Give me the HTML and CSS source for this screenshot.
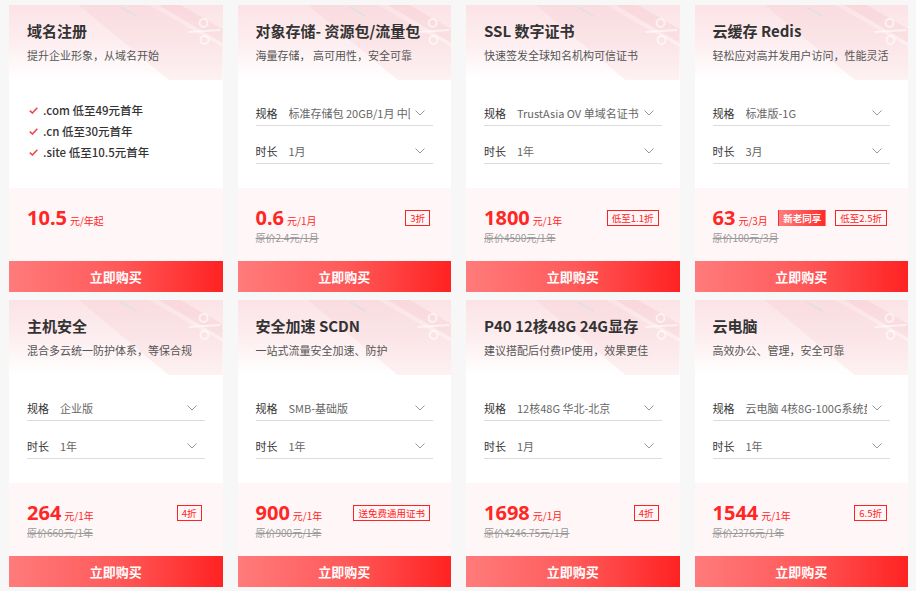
FILE: index.html
```html
<!DOCTYPE html>
<html lang="zh-CN">
<head>
<meta charset="utf-8">
<title>产品</title>
<link rel="stylesheet" href="styles.css">
</head>
<body>
<svg width="0" height="0" class="defs">
  <defs>
    <symbol id="deco" viewBox="0 0 214 75">
      <path d="M70 0 L140 0 L214 42 L214 75 L160 75 Z" fill="#f6c4c9" opacity="0.22"/>
      <path d="M150 0 L172 0 L214 24 L214 38 Z" fill="#f3b0b7" opacity="0.22"/>
      <path d="M112 2 L128 11" stroke="#cfe3ea" stroke-width="1.5" opacity="0.7"/>
      <circle cx="195" cy="18" r="4" fill="none" stroke="#fff" stroke-width="2" opacity="0.6"/>
      <circle cx="196" cy="35" r="4" fill="none" stroke="#fff" stroke-width="2" opacity="0.6"/>
      <path d="M180 27 L212 25" stroke="#fff" stroke-width="2" opacity="0.6"/>
    </symbol>
    <symbol id="chev" viewBox="0 0 10 6">
      <path d="M0.5 0.5 L5 5 L9.5 0.5" fill="none" stroke="#999" stroke-width="1"/>
    </symbol>
    <symbol id="check" viewBox="0 0 9 7">
      <path d="M0.8 3.6 L3.4 6 L8.3 0.8" fill="none" stroke="#f04848" stroke-width="1.6"/>
    </symbol>
  </defs>
</svg>
<div class="grid">

  <div class="card">
    <div class="head"><svg class="deco"><use href="#deco"/></svg><div class="title">域名注册</div><div class="sub">提升企业形象，从域名开始</div></div>
    <div class="body list">
      <div class="li"><svg class="check"><use href="#check"/></svg>.com 低至49元首年</div>
      <div class="li"><svg class="check"><use href="#check"/></svg>.cn 低至30元首年</div>
      <div class="li"><svg class="check"><use href="#check"/></svg>.site 低至10.5元首年</div>
    </div>
    <div class="price"><div class="prow"><span class="num">10.5</span><span class="unit">元/年起</span></div></div>
    <div class="btn">立即购买</div>
  </div>

  <div class="card">
    <div class="head"><svg class="deco"><use href="#deco"/></svg><div class="title">对象存储- 资源包/流量包</div><div class="sub">海量存储， 高可用性，安全可靠</div></div>
    <div class="body">
      <div class="sel"><span class="lab">规格</span><span class="val">标准存储包 20GB/1月 中国内地</span><svg class="chev"><use href="#chev"/></svg></div>
      <div class="sel"><span class="lab">时长</span><span class="val">1月</span><svg class="chev"><use href="#chev"/></svg></div>
    </div>
    <div class="price"><div class="prow"><span class="num">0.6</span><span class="unit">元/1月</span><span class="tags"><span class="tag">3折</span></span></div><div class="orig">原价2.4元/1月</div></div>
    <div class="btn">立即购买</div>
  </div>

  <div class="card">
    <div class="head"><svg class="deco"><use href="#deco"/></svg><div class="title">SSL 数字证书</div><div class="sub">快速签发全球知名机构可信证书</div></div>
    <div class="body">
      <div class="sel"><span class="lab">规格</span><span class="val">TrustAsia OV 单域名证书</span><svg class="chev"><use href="#chev"/></svg></div>
      <div class="sel"><span class="lab">时长</span><span class="val">1年</span><svg class="chev"><use href="#chev"/></svg></div>
    </div>
    <div class="price"><div class="prow"><span class="num">1800</span><span class="unit">元/1年</span><span class="tags"><span class="tag">低至1.1折</span></span></div><div class="orig">原价4500元/1年</div></div>
    <div class="btn">立即购买</div>
  </div>

  <div class="card">
    <div class="head"><svg class="deco"><use href="#deco"/></svg><div class="title">云缓存 Redis</div><div class="sub">轻松应对高并发用户访问，性能灵活</div></div>
    <div class="body">
      <div class="sel"><span class="lab">规格</span><span class="val">标准版-1G</span><svg class="chev"><use href="#chev"/></svg></div>
      <div class="sel"><span class="lab">时长</span><span class="val">3月</span><svg class="chev"><use href="#chev"/></svg></div>
    </div>
    <div class="price"><div class="prow"><span class="num">63</span><span class="unit">元/3月</span><span class="tags"><span class="tag fill">新老同享</span><span class="tag">低至2.5折</span></span></div><div class="orig">原价100元/3月</div></div>
    <div class="btn">立即购买</div>
  </div>

  <div class="card">
    <div class="head"><svg class="deco"><use href="#deco"/></svg><div class="title">主机安全</div><div class="sub">混合多云统一防护体系，等保合规</div></div>
    <div class="body">
      <div class="sel"><span class="lab">规格</span><span class="val">企业版</span><svg class="chev"><use href="#chev"/></svg></div>
      <div class="sel"><span class="lab">时长</span><span class="val">1年</span><svg class="chev"><use href="#chev"/></svg></div>
    </div>
    <div class="price"><div class="prow"><span class="num">264</span><span class="unit">元/1年</span><span class="tags"><span class="tag">4折</span></span></div><div class="orig">原价660元/1年</div></div>
    <div class="btn">立即购买</div>
  </div>

  <div class="card">
    <div class="head"><svg class="deco"><use href="#deco"/></svg><div class="title">安全加速 SCDN</div><div class="sub">一站式流量安全加速、防护</div></div>
    <div class="body">
      <div class="sel"><span class="lab">规格</span><span class="val">SMB-基础版</span><svg class="chev"><use href="#chev"/></svg></div>
      <div class="sel"><span class="lab">时长</span><span class="val">1年</span><svg class="chev"><use href="#chev"/></svg></div>
    </div>
    <div class="price"><div class="prow"><span class="num">900</span><span class="unit">元/1年</span><span class="tags"><span class="tag">送免费通用证书</span></span></div><div class="orig">原价900元/1年</div></div>
    <div class="btn">立即购买</div>
  </div>

  <div class="card">
    <div class="head"><svg class="deco"><use href="#deco"/></svg><div class="title">P40 12核48G 24G显存</div><div class="sub">建议搭配后付费IP使用，效果更佳</div></div>
    <div class="body">
      <div class="sel"><span class="lab">规格</span><span class="val">12核48G 华北-北京</span><svg class="chev"><use href="#chev"/></svg></div>
      <div class="sel"><span class="lab">时长</span><span class="val">1月</span><svg class="chev"><use href="#chev"/></svg></div>
    </div>
    <div class="price"><div class="prow"><span class="num">1698</span><span class="unit">元/1月</span><span class="tags"><span class="tag">4折</span></span></div><div class="orig">原价4246.75元/1月</div></div>
    <div class="btn">立即购买</div>
  </div>

  <div class="card">
    <div class="head"><svg class="deco"><use href="#deco"/></svg><div class="title">云电脑</div><div class="sub">高效办公、管理，安全可靠</div></div>
    <div class="body">
      <div class="sel"><span class="lab">规格</span><span class="val">云电脑 4核8G-100G系统盘</span><svg class="chev"><use href="#chev"/></svg></div>
      <div class="sel"><span class="lab">时长</span><span class="val">1年</span><svg class="chev"><use href="#chev"/></svg></div>
    </div>
    <div class="price"><div class="prow"><span class="num">1544</span><span class="unit">元/1年</span><span class="tags"><span class="tag">6.5折</span></span></div><div class="orig">原价2376元/1年</div></div>
    <div class="btn">立即购买</div>
  </div>

</div>
</body>
</html>
```

FILE: styles.css
```css
* { box-sizing: border-box; }
html, body { margin: 0; padding: 0; }
body {
  background: #f7f7f7;
  font-family: "Noto Sans CJK SC", "Noto Sans", sans-serif;
  color: #333;
  width: 916px;
  height: 591px;
  overflow: hidden;
}
.defs { position: absolute; width: 0; height: 0; }
.grid {
  display: grid;
  grid-template-columns: repeat(4, 1fr);
  column-gap: 15px;
  row-gap: 8px;
  padding: 5px 8px 0 9px;
}
.card {
  background: #fff;
  height: 287px;
  display: flex;
  flex-direction: column;
  overflow: hidden;
}
.head {
  position: relative;
  height: 75px;
  padding: 15px 19px 0 18px;
  background: linear-gradient(180deg, #fbe3e6 0%, #fdeef0 50%, #ffffff 100%);
  overflow: hidden;
}
.deco {
  position: absolute;
  left: 0; top: 0;
  width: 100%; height: 75px;
}
.title {
  position: relative;
  font-size: 15px;
  font-weight: 600;
  line-height: 22px;
  color: #333;
  white-space: nowrap;
}
.sub {
  position: relative;
  font-size: 11px;
  line-height: 18px;
  margin-top: 4px;
  color: #555;
  white-space: nowrap;
}
.body {
  height: 108px;
  padding: 21px 18px 0 18px;
}
.body.list { padding-top: 20px; }
.li {
  display: flex;
  align-items: center;
  font-size: 11.5px;
  line-height: 21px;
  font-weight: 500;
  color: #333;
  white-space: nowrap;
}
.check { width: 9px; height: 7px; margin: 0 5px 0 2px; flex: none; }
.sel {
  display: flex;
  align-items: center;
  height: 25px;
  border-bottom: 1px solid #dcdcdc;
  font-size: 11px;
  line-height: 24px;
  margin-bottom: 13px;
}
.lab { color: #333; flex: none; width: 33px; }
.val {
  flex: 1;
  color: #666;
  white-space: nowrap;
  overflow: hidden;
  min-width: 0;
}
.chev { width: 10px; height: 6px; flex: none; margin: 0 8px 0 5px; }
.price {
  height: 73px;
  background: #fff7f7;
  padding: 17px 21px 0 18px;
}
.prow {
  display: flex;
  align-items: baseline;
  height: 26px;
  line-height: 26px;
}
.num {
  font-size: 20px;
  font-weight: 700;
  color: #ff2626;
  font-family: "Noto Sans", "Noto Sans CJK SC", sans-serif;
}
.unit {
  font-size: 10px;
  color: #ff2626;
  margin-left: 3px;
}
.tags {
  margin-left: auto;
  display: flex;
  gap: 9px;
  align-self: center;
}
.tag {
  display: block;
  border: 1px solid #f22;
  color: #f22;
  font-size: 9.5px;
  line-height: 14px;
  padding: 0 4px;
  white-space: nowrap;
}
.tag.fill {
  border-color: transparent;
  background: linear-gradient(90deg, #ff7f7f, #ff2b2b);
  color: #fff;
  font-weight: 600;
}
.orig {
  font-size: 10px;
  line-height: 14px;
  color: #999;
  text-decoration: line-through;
}
.btn {
  height: 31px;
  line-height: 31px;
  text-align: center;
  color: #fff;
  font-size: 13px;
  font-weight: 700;
  background: linear-gradient(90deg, #ff7b7b 0%, #ff5a5a 50%, #ff2222 100%);
}
```
